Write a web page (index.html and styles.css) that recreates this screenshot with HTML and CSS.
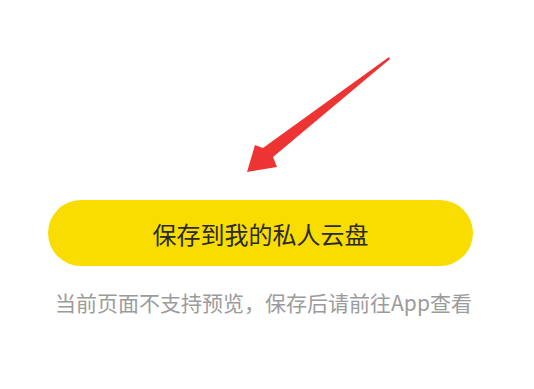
FILE: index.html
```html
<!DOCTYPE html>
<html lang="zh-CN">
<head>
<meta charset="utf-8">
<link rel="stylesheet" href="styles.css">
</head>
<body>
<main class="page">
  <div class="hint">
    <svg class="arrow" viewBox="0 0 534 200" width="534" height="200" aria-hidden="true">
      <polygon fill="#ee3333" points="389,57 263,148 255,145 247,172 277,167 273,157 390,59"/>
    </svg>
  </div>
  <button class="save-btn" type="button">保存到我的私人云盘</button>
  <p class="note">当前页面不支持预览，保存后请前往App查看</p>
</main>
</body>
</html>
```
FILE: styles.css
```css
html, body {
  margin: 0;
  padding: 0;
  background: #ffffff;
}
body {
  width: 534px;
  height: 389px;
  overflow: hidden;
  font-family: "Noto Sans CJK SC", "Noto Sans", sans-serif;
}
.page {
  display: flex;
  flex-direction: column;
}
.hint {
  height: 200px;
}
.arrow {
  display: block;
}
.save-btn {
  margin: 0 0 0 48px;
  width: 425px;
  height: 66px;
  border: none;
  border-radius: 33px;
  background: #f9dc00;
  color: #2a2a2a;
  font-family: "Noto Sans CJK SC", "Noto Sans", sans-serif;
  font-size: 24px;
  font-weight: 400;
  display: flex;
  align-items: center;
  justify-content: center;
  padding: 0;
}
.note {
  margin: 21px 0 0 48px;
  width: 431px;
  text-align: center;
  font-size: 21px;
  line-height: 30px;
  color: #9b9b9b;
}
```
